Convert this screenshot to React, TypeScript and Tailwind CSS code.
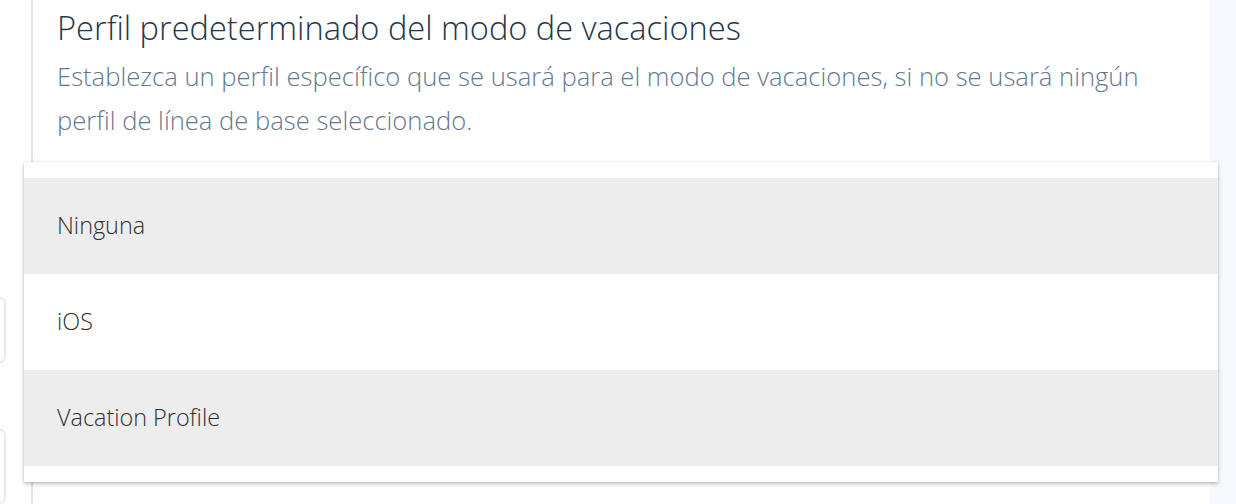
import React from "react";

const options = [
  { label: "Ninguna", active: true },
  { label: "iOS", active: false },
  { label: "Vacation Profile", active: true },
];

export default function App() {
  return (
    <div
      className="relative flex h-[504px] w-[1236px] overflow-hidden bg-white"
      style={{ fontFamily: "'Open Sans', Lato, sans-serif" }}
    >
      {/* stray inputs peeking from the left */}
      <div className="flex w-[31px] shrink-0 flex-col pt-[297px]">
        <div className="-ml-[60px] h-[71px] w-[66px] rounded-md border-2 border-[#e7ebf1]" />
        <div className="-ml-[60px] mt-[66px] h-[80px] w-[66px] rounded-md border-2 border-[#e7ebf1]" />
      </div>

      <section className="flex-1 border-l-2 border-[#e3e3e3] pl-[24px] pt-[7px]">
        <h2 className="text-[32.6px] font-light leading-[42px] text-[#25364a]">
          Perfil predeterminado del modo de vacaciones
        </h2>
        <p className="mt-[6px] w-[1110px] text-[25.6px] font-light leading-[44px] text-[#66788f]">
          Establezca un perfil específico que se usará para el modo de vacaciones, si no se usará ningún perfil de
          línea de base seleccionado.
        </p>
      </section>

      <div className="w-[26px] shrink-0 bg-[#f5f8fc]" />

      {/* open dropdown */}
      <ul className="absolute left-[24px] top-[162px] w-[1194px] bg-white py-4 shadow-[0_2px_4px_rgba(0,0,0,0.25),0_0_2px_rgba(0,0,0,0.08)]">
        {options.map((o) => (
          <li
            key={o.label}
            className={`flex h-24 items-center pl-[33px] text-[23.4px] font-light text-[#2f2f2f] ${o.active ? "bg-[#ededed]" : "bg-white"}`}
          >
            {o.label}
          </li>
        ))}
      </ul>
    </div>
  );
}
